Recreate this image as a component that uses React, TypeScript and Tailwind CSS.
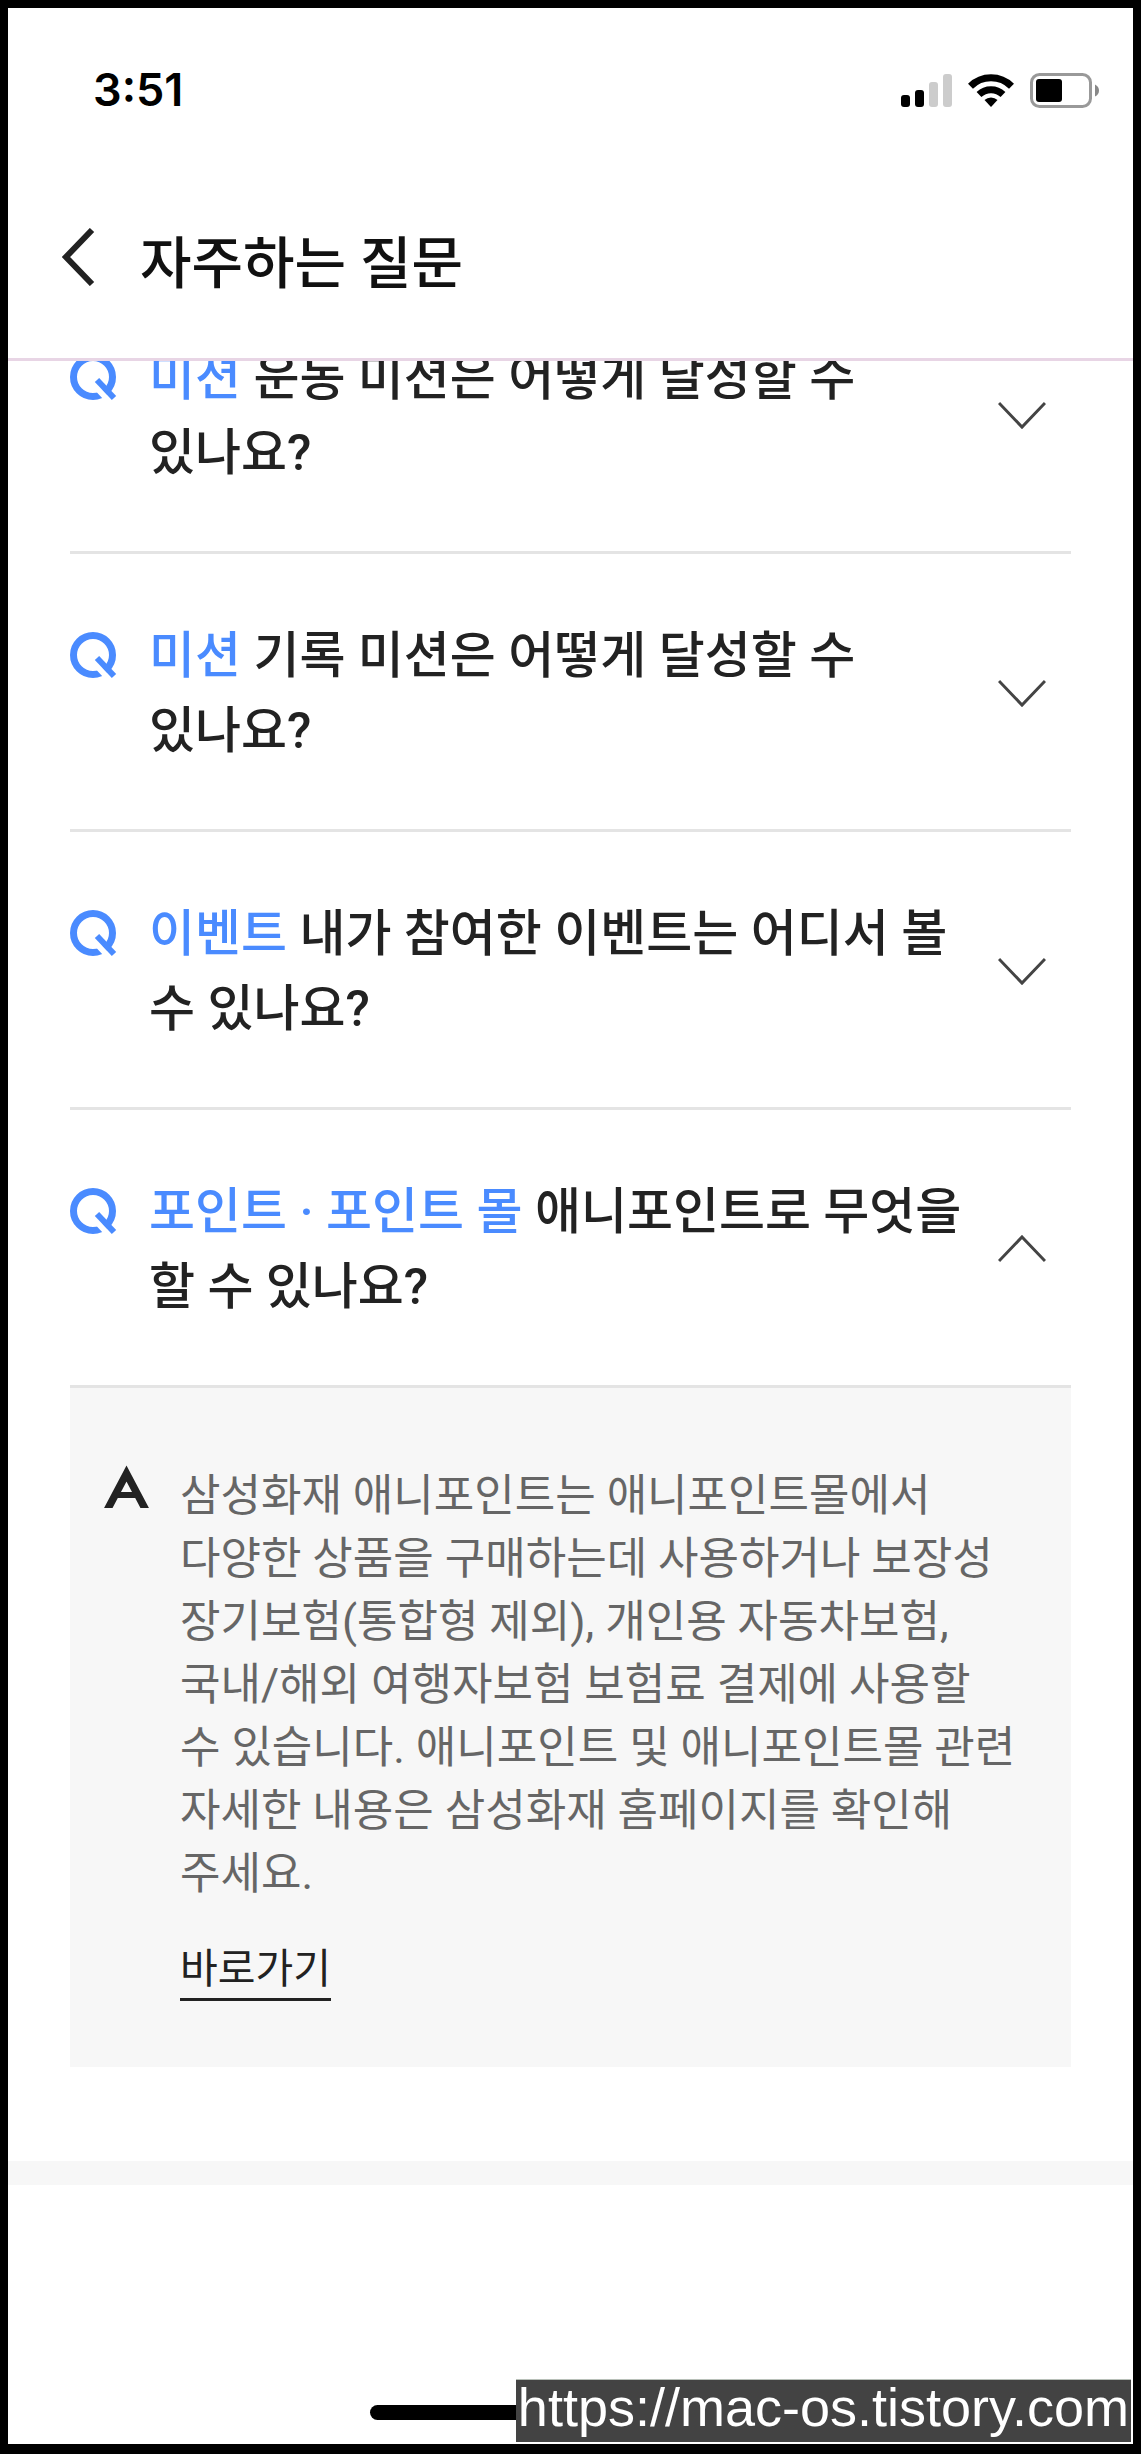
import { useState } from "react";

type Faq = {
  category: string;
  question: string;
  answer?: string;
};

const faqs: Faq[] = [
  { category: "미션", question: "운동 미션은 어떻게 달성할 수 있나요?" },
  { category: "미션", question: "기록 미션은 어떻게 달성할 수 있나요?" },
  { category: "이벤트", question: "내가 참여한 이벤트는 어디서 볼 수 있나요?" },
  {
    category: "포인트 · 포인트 몰",
    question: "애니포인트로 무엇을 할 수 있나요?",
    answer:
      "삼성화재 애니포인트는 애니포인트몰에서 다양한 상품을 구매하는데 사용하거나 보장성 장기보험(통합형 제외), 개인용 자동차보험, 국내/해외 여행자보험 보험료 결제에 사용할 수 있습니다. 애니포인트 및 애니포인트몰 관련 자세한 내용은 삼성화재 홈페이지를 확인해 주세요.",
  },
];

function SignalIcon() {
  return (
    <svg width="51" height="33" viewBox="0 0 51 33" aria-hidden="true">
      <rect x="0" y="21" width="9" height="12" rx="3" fill="#000" />
      <rect x="14" y="16" width="9" height="17" rx="3" fill="#000" />
      <rect x="28" y="8" width="9" height="25" rx="3" fill="#ccc" />
      <rect x="42" y="0" width="9" height="33" rx="3" fill="#ccc" />
    </svg>
  );
}

function WifiIcon() {
  return (
    <svg width="46" height="33" viewBox="0 0 46 33" aria-hidden="true">
      <g fill="none" stroke="#000" strokeWidth="7">
        <path d="M2.500 12.300A29 29 0 0 1 43.500 12.300" />
        <path d="M11 20.500A17.500 17.500 0 0 1 35 20.500" />
      </g>
      <path d="M16.500 26A9.500 9.500 0 0 1 29.500 26L23 33Z" fill="#000" />
    </svg>
  );
}

function BatteryIcon() {
  return (
    <svg width="70" height="35" viewBox="0 0 70 35" aria-hidden="true">
      <rect x="1.500" y="1.500" width="59" height="32" rx="8" fill="none" stroke="#999" strokeWidth="3" />
      <rect x="6" y="6" width="26" height="23" rx="3" fill="#000" />
      <path d="M65 11.500Q69 13.500 69 17.500T65 23.500Z" fill="#888" />
    </svg>
  );
}

function BackIcon() {
  return (
    <svg width="34" height="58" viewBox="0 0 34 58" fill="none" stroke="#222" strokeWidth="6" aria-hidden="true">
      <polyline points="30,2 4,29 30,56" />
    </svg>
  );
}

function QuestionIcon() {
  return (
    <svg className="shrink-0" width="48" height="48" viewBox="0 0 48 48" fill="none" aria-hidden="true">
      <circle cx="23" cy="23" r="19.500" stroke="#4a8bff" strokeWidth="7" />
      <line x1="23" y1="30" x2="41" y2="49" stroke="#fff" strokeWidth="6" />
      <line x1="27" y1="26" x2="44" y2="44" stroke="#4a8bff" strokeWidth="6" />
    </svg>
  );
}

function AnswerIcon() {
  return (
    <svg className="shrink-0" width="46" height="43" viewBox="0 0 46 43" fill="none" stroke="#222" strokeWidth="7.500" aria-hidden="true">
      <polyline points="0.600,50 22.500,8.500 44.400,50" />
      <line x1="12" y1="30" x2="34" y2="30" strokeWidth="6" />
    </svg>
  );
}

function ChevronIcon({ open }: { open: boolean }) {
  return (
    <svg className="shrink-0" width="48" height="30" viewBox="0 0 48 30" fill="none" stroke="#444" strokeWidth="3" aria-hidden="true">
      {open ? <polyline points="1,26 24,2 47,26" /> : <polyline points="1,2 24,26 47,2" />}
    </svg>
  );
}

function FaqItem({ faq }: { faq: Faq }) {
  const [open, setOpen] = useState(Boolean(faq.answer));
  return (
    <li>
      <button
        type="button"
        aria-expanded={open}
        onClick={() => setOpen(!open)}
        className="flex w-full items-center border-b-[3px] border-[#e4e4e4] pt-[65px] pr-[25px] pb-[60px] text-left"
      >
        <span className="mt-[13px] self-start">
          <QuestionIcon />
        </span>
        <span className="ml-[31px] flex-1 pr-6 text-[50px] leading-[75px] font-medium break-keep text-[#222]">
          <span className="text-[#4a8bff]">{faq.category}</span> {faq.question}
        </span>
        <ChevronIcon open={open} />
      </button>
      {open && faq.answer && (
        <div className="flex bg-[#f7f7f7] pt-[77px] pr-[53px] pb-[66px] pl-[34px] break-keep">
          <AnswerIcon />
          <div className="ml-[30px] flex-1">
            <p className="text-[44px] leading-[63px] text-[#666]">{faq.answer}</p>
            <a href="#shortcut" className="mt-[35px] block w-fit border-b-[3px] border-[#222] text-[41px] leading-[57px] text-[#222]">
              바로가기
            </a>
          </div>
        </div>
      )}
    </li>
  );
}

export default function App() {
  return (
    <div className="relative flex min-h-screen flex-col border-8 border-b-[10px] border-black bg-white font-['Roboto','Noto_Sans_CJK_KR',sans-serif]">
      <div className="flex items-start justify-between pt-14 pr-[33px] pl-[85px]">
        <time className="font-['Inter',sans-serif] text-[45px] leading-[52px] font-semibold text-black">3:51</time>
        <div className="flex items-center gap-4 pt-[9px]">
          <SignalIcon />
          <WifiIcon />
          <BatteryIcon />
        </div>
      </div>

      <header className="flex items-center gap-[44px] border-b-[3px] border-[#e8d5e5] pt-[89px] pb-[49px] pl-[54px]">
        <button type="button" aria-label="뒤로">
          <BackIcon />
        </button>
        <h1 className="pt-[14px] text-[56px] leading-[90px] font-medium text-[#111]">자주하는 질문</h1>
      </header>

      <main className="overflow-hidden">
        <ul className="-mt-[85px] px-[62px]">
          {faqs.map((faq) => (
            <FaqItem key={faq.question} faq={faq} />
          ))}
        </ul>
        <div className="mt-[94px] h-6 bg-[#f7f7f7]" />
      </main>

      <footer className="mt-auto flex justify-center pb-6">
        <div className="h-[15px] w-[402px] rounded-full bg-black" />
      </footer>

      <a
        href="https://mac-os.tistory.com"
        className="absolute right-[2px] bottom-[2px] border-t border-[#b8c0b8] bg-[#434343] px-[2px] pb-2 font-['Liberation_Sans',sans-serif] text-[54px] leading-[54px] text-white"
      >
        https://mac-os.tistory.com
      </a>
    </div>
  );
}
